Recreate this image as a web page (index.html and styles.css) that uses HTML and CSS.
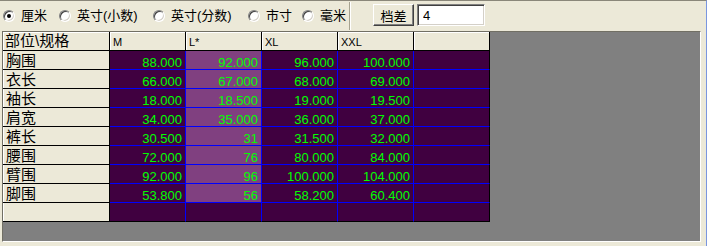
FILE: index.html
```html
<!DOCTYPE html>
<html lang="zh">
<head>
    <meta charset="UTF-8">
    <title>尺寸表</title>
    <link rel="stylesheet" href="styles.css">
</head>
<body>
    <div class="window">
        <div class="toolbar">
            <div class="units">
                <label class="opt opt-cm"><span class="radio on"></span>厘米</label>
                <label class="opt opt-in"><span class="radio"></span>英寸(小数)</label>
                <label class="opt opt-fr"><span class="radio"></span>英寸(分数)</label>
                <label class="opt opt-cun"><span class="radio"></span>市寸</label>
                <label class="opt"><span class="radio"></span>毫米</label>
            </div>
            <button class="btn">档差</button>
            <input class="step" type="text" value="4">
        </div>

        <div class="grid">
            <div class="table">
                <div class="hd corner">部位\规格</div>
                <div class="hd">M</div>
                <div class="hd">L*</div>
                <div class="hd">XL</div>
                <div class="hd">XXL</div>
                <div class="hd"></div>

                <div class="rh">胸围</div>
                <div class="cell">88.000</div>
                <div class="cell sel">92.000</div>
                <div class="cell">96.000</div>
                <div class="cell">100.000</div>
                <div class="cell end"></div>

                <div class="rh">衣长</div>
                <div class="cell">66.000</div>
                <div class="cell sel">67.000</div>
                <div class="cell">68.000</div>
                <div class="cell">69.000</div>
                <div class="cell end"></div>

                <div class="rh">袖长</div>
                <div class="cell">18.000</div>
                <div class="cell sel">18.500</div>
                <div class="cell">19.000</div>
                <div class="cell">19.500</div>
                <div class="cell end"></div>

                <div class="rh">肩宽</div>
                <div class="cell">34.000</div>
                <div class="cell sel">35.000</div>
                <div class="cell">36.000</div>
                <div class="cell">37.000</div>
                <div class="cell end"></div>

                <div class="rh">裤长</div>
                <div class="cell">30.500</div>
                <div class="cell sel">31</div>
                <div class="cell">31.500</div>
                <div class="cell">32.000</div>
                <div class="cell end"></div>

                <div class="rh">腰围</div>
                <div class="cell">72.000</div>
                <div class="cell sel">76</div>
                <div class="cell">80.000</div>
                <div class="cell">84.000</div>
                <div class="cell end"></div>

                <div class="rh">臂围</div>
                <div class="cell">92.000</div>
                <div class="cell sel">96</div>
                <div class="cell">100.000</div>
                <div class="cell">104.000</div>
                <div class="cell end"></div>

                <div class="rh">脚围</div>
                <div class="cell">53.800</div>
                <div class="cell sel">56</div>
                <div class="cell">58.200</div>
                <div class="cell">60.400</div>
                <div class="cell end"></div>

                <div class="rh"></div>
                <div class="cell last"></div>
                <div class="cell last"></div>
                <div class="cell last"></div>
                <div class="cell last"></div>
                <div class="cell last end"></div>
            </div>
        </div>
    </div>
</body>
</html>
```

FILE: styles.css
```css
* {
    box-sizing: border-box;
}
body {
    margin: 0;
    background-color: #ece9d8;
    font-family: "Liberation Sans", "Noto Sans CJK SC", sans-serif;
    font-size: 13px;
    color: #000;
}
.window {
    width: 707px;
    height: 246px;
    border-top: 1px solid #8a877a;
    border-right: 1px solid #7a96df;
}
.toolbar {
    display: flex;
    align-items: center;
    height: 30px;
}
.units {
    display: flex;
    align-items: center;
    width: 350px;
    height: 28px;
    padding-left: 3px;
    border-right: 1px solid #a6a390;
    box-shadow: 1px 0 0 #fff;
}
.opt {
    display: flex;
    align-items: center;
    gap: 6px;
    line-height: 16px;
}
.opt-cm { width: 56px; }
.opt-in { width: 94px; }
.opt-fr { width: 95px; }
.opt-cun { width: 54px; }
.radio {
    position: relative;
    width: 12px;
    height: 12px;
    border-radius: 50%;
    background-color: #fff;
    border: 1px solid;
    border-color: #808080 #fff #fff #808080;
    box-shadow: inset 1px 1px 0 #404040, inset -1px -1px 0 #d4d0c8;
}
.radio.on::after {
    content: "";
    position: absolute;
    left: 3px;
    top: 3px;
    width: 4px;
    height: 4px;
    border-radius: 50%;
    background-color: #000;
}
.btn {
    width: 41px;
    height: 22px;
    margin: 0 0 2px 23px;
    padding: 0;
    background-color: #ece9d8;
    border: 1px solid;
    border-color: #fff #404040 #404040 #fff;
    box-shadow: inset -1px -1px 0 #808080;
    font: 13px "Liberation Sans", "Noto Sans CJK SC", sans-serif;
    color: #000;
}
.step {
    width: 68px;
    height: 22px;
    margin: 0 0 2px 3px;
    padding: 0 0 0 5px;
    background-color: #fff;
    border: 1px solid;
    border-color: #808080 #fff #fff #808080;
    box-shadow: inset 1px 1px 0 #404040, inset -1px -1px 0 #d4d0c8;
    font: 13px "Liberation Sans", sans-serif;
    color: #000;
    outline: none;
}
.grid {
    width: 699px;
    height: 211px;
    margin-left: 2px;
    background-color: #808080;
    border: 1px solid;
    border-color: #716f64 #fff #fff #716f64;
}
.table {
    display: grid;
    grid-template-columns: 107px repeat(5, 76px);
    grid-auto-rows: 19px;
    width: 487px;
}
.hd {
    background-color: #ece9d8;
    border-right: 1px solid #000;
    border-bottom: 1px solid #000;
    box-shadow: inset 1px 1px 0 #fff;
    padding: 2px 0 0 3px;
    font-size: 11px;
    line-height: 16px;
}
.hd.corner {
    padding: 0 0 0 2px;
    font-size: 15px;
    line-height: 18px;
}
.rh {
    background-color: #ece9d8;
    border-right: 1px solid #000;
    border-bottom: 1px solid #000;
    box-shadow: inset 1px 0 0 #fff;
    padding: 1px 0 0 3px;
    font-size: 15px;
    line-height: 17px;
}
.cell {
    background-color: #400040;
    color: #00ff00;
    border-right: 1px solid #0000ff;
    border-bottom: 1px solid #0000ff;
    text-align: right;
    padding: 5px 3px 0 0;
    font-size: 13px;
    line-height: 13px;
}
.cell.sel {
    background-color: #804080;
}
.cell.end {
    border-right-color: #000;
}
.cell.last {
    border-bottom-color: #000;
}
```
